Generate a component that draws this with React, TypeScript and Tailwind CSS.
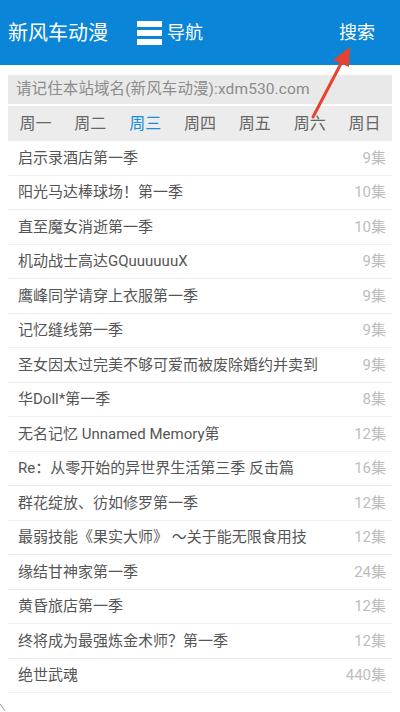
import React from "react";

const WEEK = ["周一", "周二", "周三", "周四", "周五", "周六", "周日"];

const SHOWS = [
  { title: "启示录酒店第一季", eps: "9集" },
  { title: "阳光马达棒球场！第一季", eps: "10集" },
  { title: "直至魔女消逝第一季", eps: "10集" },
  { title: "机动战士高达GQuuuuuuX", eps: "9集" },
  { title: "鹰峰同学请穿上衣服第一季", eps: "9集" },
  { title: "记忆缝线第一季", eps: "9集" },
  { title: "圣女因太过完美不够可爱而被废除婚约并卖到", eps: "9集" },
  { title: "华Doll*第一季", eps: "8集" },
  { title: "无名记忆 Unnamed Memory第", eps: "12集" },
  { title: "Re：从零开始的异世界生活第三季 反击篇", eps: "16集" },
  { title: "群花绽放、彷如修罗第一季", eps: "12集" },
  { title: "最弱技能《果实大师》 ～关于能无限食用技", eps: "12集" },
  { title: "缘结甘神家第一季", eps: "24集" },
  { title: "黄昏旅店第一季", eps: "12集" },
  { title: "终将成为最强炼金术师？第一季", eps: "12集" },
  { title: "绝世武魂", eps: "440集" },
];

// ── Header ────────────────────────────────────────────────────────────────────

function Header() {
  return (
    <header className="flex h-[65px] items-center bg-[#0a85d7] px-2 text-white">
      <span className="text-[20px] leading-none">新风车动漫</span>
      <div className="ml-[29px] flex items-center gap-[5px]">
        <div className="flex w-[25px] flex-col gap-[3px]">
          <span className="h-[6px] bg-white" />
          <span className="h-[6px] bg-white" />
          <span className="h-[6px] bg-white" />
        </div>
        <span className="text-[18px] leading-none">导航</span>
      </div>
      <div className="flex-1" />
      <span className="mr-[17px] text-[18px] leading-none">搜索</span>
    </header>
  );
}

// ── App ───────────────────────────────────────────────────────────────────────

export default function App() {
  return (
    <div
      className="relative h-[712px] w-[400px] overflow-hidden bg-white"
      style={{ fontFamily: 'Roboto, "Noto Sans CJK SC", sans-serif' }}
    >
      <Header />

      <div className="px-2 pt-[10px]">
        <div className="flex h-[29px] items-center bg-[#e9e9e9] pl-2 text-[15.5px] tracking-[0.1px] text-[#8c8c8c]">
          请记住本站域名(新风车动漫):xdm530.com
        </div>

        <div className="mt-[2px] grid h-[35px] grid-cols-7 items-center bg-[#ececec] text-[16px] text-[#666]">
          {WEEK.map((d, i) => (
            <span key={d} className={i === 2 ? "text-center text-[#1a8cdc]" : "text-center"}>
              {d}
            </span>
          ))}
        </div>

        <ul>
          {SHOWS.map((s) => (
            <li
              key={s.title}
              className="flex h-[34.5px] items-center justify-between border-b border-[#f0f0f0] pl-[10px] pr-[6px] text-[15px]"
            >
              <span className="truncate text-[#555]">{s.title}</span>
              <span className="ml-3 shrink-0 text-[#bdbdbd]">{s.eps}</span>
            </li>
          ))}
        </ul>
      </div>

      <svg className="pointer-events-none absolute left-0 top-0" width="400" height="712">
        <line x1="313" y1="117" x2="346" y2="54" stroke="#e5432f" strokeWidth="3" strokeLinecap="round" />
        <polygon points="350,47 333,60 349,67" fill="#e5432f" />
        <line x1="0" y1="704" x2="5" y2="711" stroke="#999" strokeWidth="1" />
      </svg>
    </div>
  );
}
